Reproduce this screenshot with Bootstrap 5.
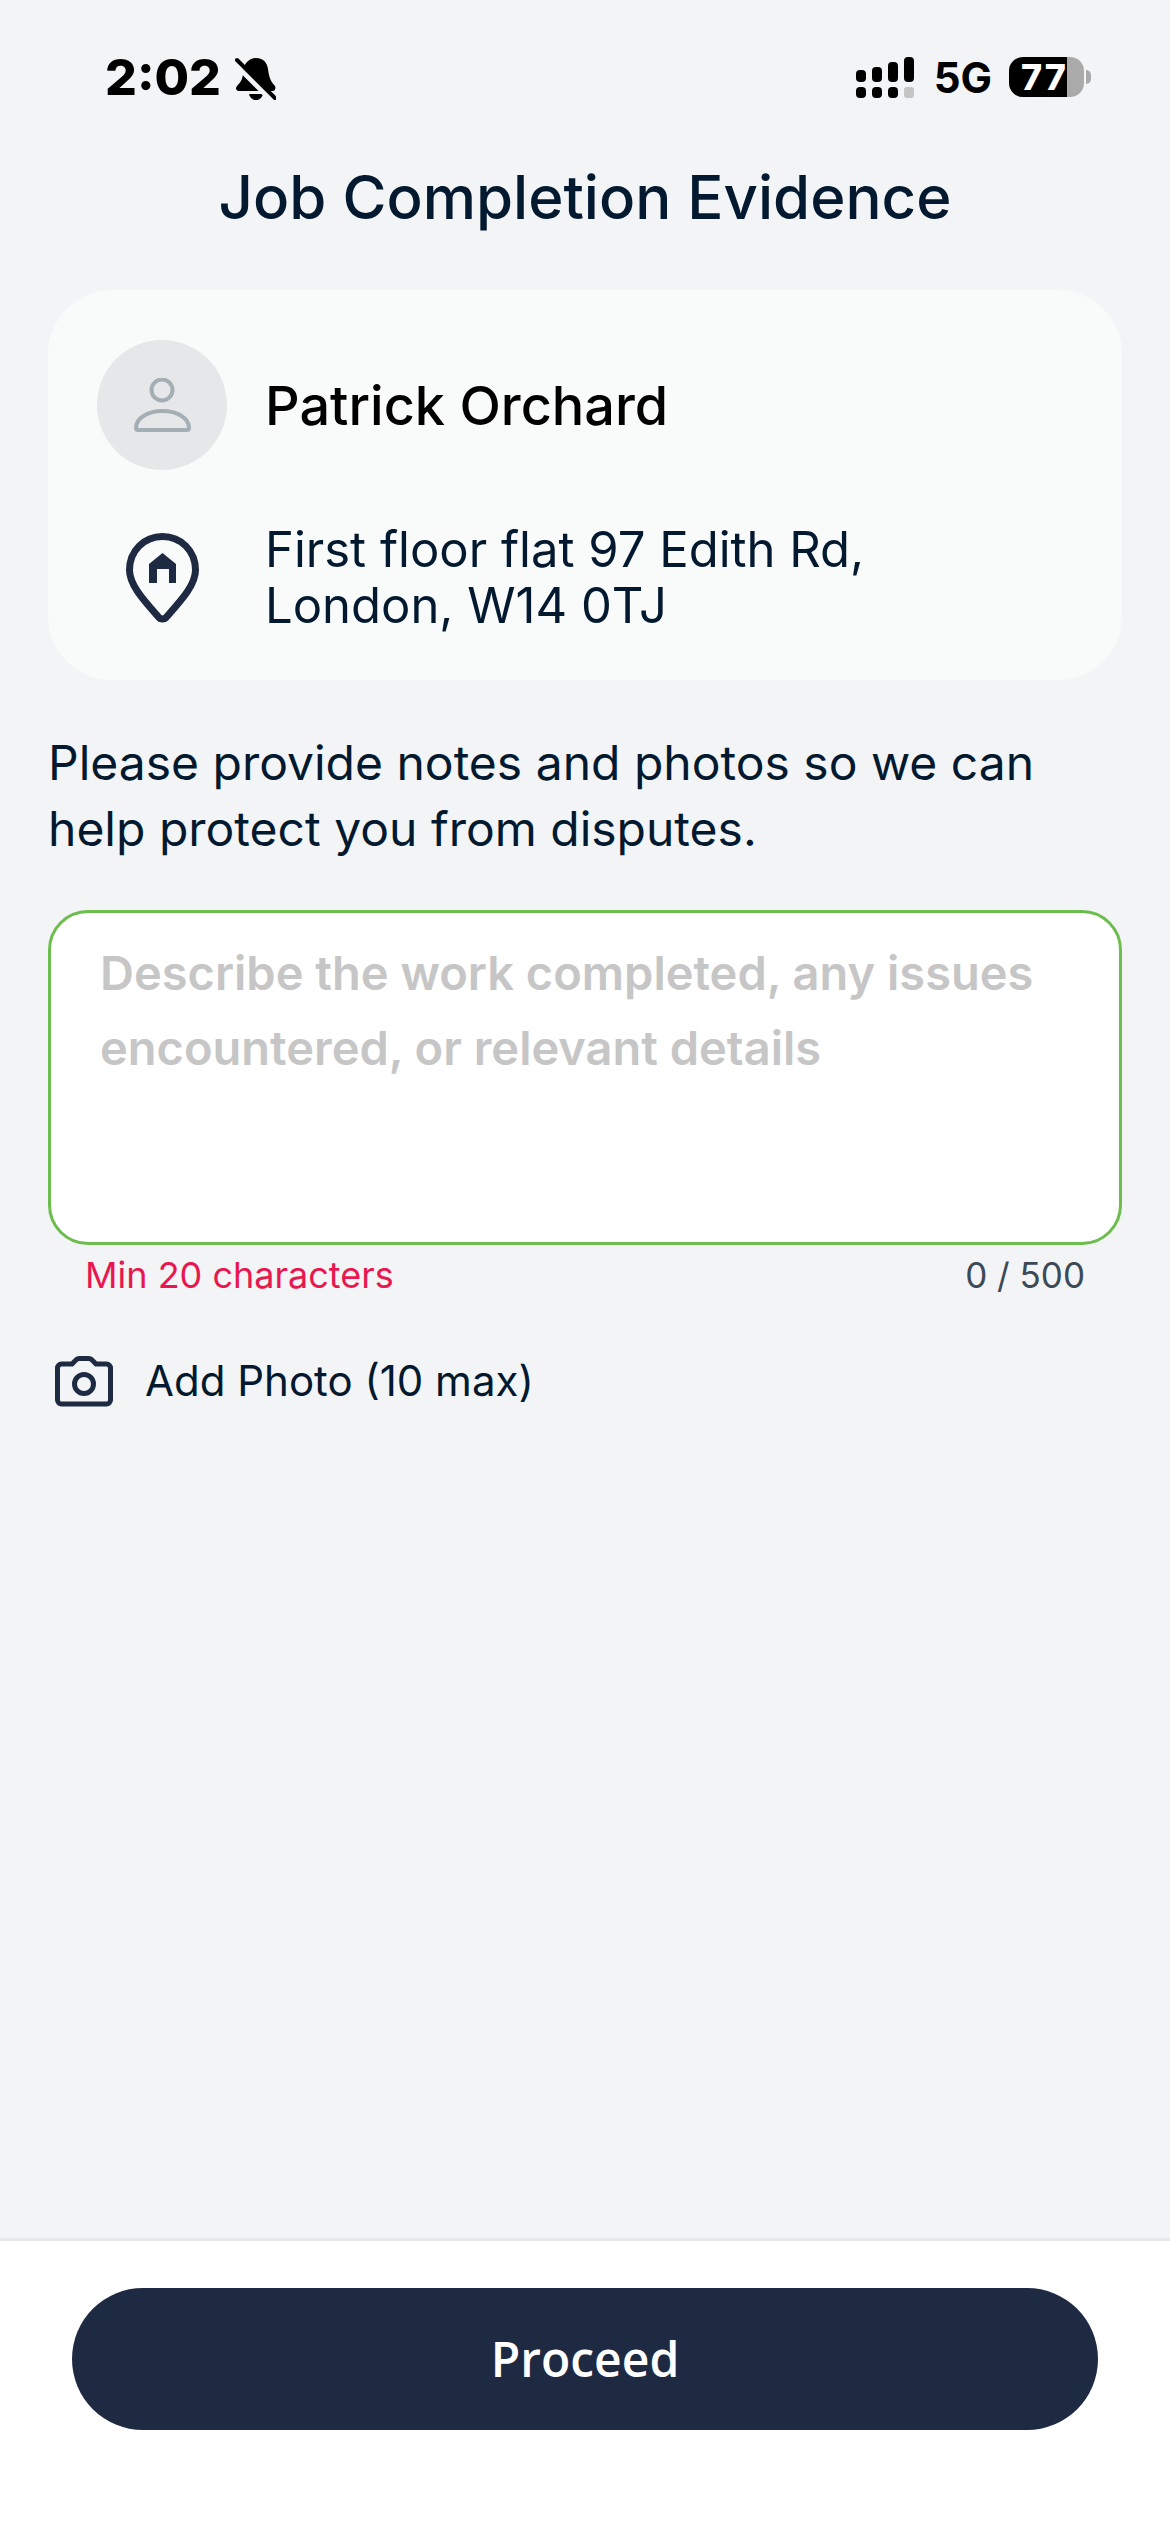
<!DOCTYPE html>
<html lang="en">
<head>
  <meta charset="UTF-8" />
  <meta name="viewport" content="width=device-width, initial-scale=1" />
  <title>Job Completion Evidence</title>
  <link rel="stylesheet" href="https://cdn.jsdelivr.net/npm/bootstrap@5.3.3/dist/css/bootstrap.min.css" />
  <style>
    body {
      background: #f2f4f6;
      font-family: Inter, "Liberation Sans", sans-serif;
      color: #03192f;
      height: 2532px;
      overflow: hidden;
    }

    .status-row {
      height: 100px;
      padding: 57px 86px 0 105px;
      color: #000;
    }

    .clock {
      font-size: 50px;
      font-weight: 800;
      line-height: 41px;
      width: 130px;
    }

    .net-label {
      font-size: 42px;
      font-weight: 700;
      line-height: 41px;
      margin: 0 17px 0 20px;
    }

    .battery-pill {
      position: relative;
      width: 75px;
      height: 40px;
      border-radius: 14px;
      background: linear-gradient(90deg, #000 77%, #aaa 77%);
      color: #fff;
      font-size: 36px;
      font-weight: 800;
      letter-spacing: 2px;
      line-height: 40px;
      padding-left: 12px;
      white-space: nowrap;
    }

    .battery-pill::after {
      content: "";
      position: absolute;
      right: -7px;
      top: 13px;
      width: 5px;
      height: 14px;
      border-radius: 0 7px 7px 0;
      background: #aaa;
    }

    .page-title {
      font-size: 60px;
      font-weight: 500;
      line-height: 72px;
      margin: 61px 0 0;
      text-align: center;
    }

    .job-card {
      margin: 57px 48px 0;
      height: 390px;
      border: 0;
      border-radius: 64px;
      background: #f9fbfa;
      padding: 50px 49px 0;
    }

    .avatar-disc {
      width: 130px;
      height: 130px;
      background: #e6e7e9;
      flex-shrink: 0;
    }

    .client-name {
      font-size: 54px;
      font-weight: 500;
      color: #000;
      margin-left: 38px;
    }

    .address-row {
      margin-top: 52px;
    }

    .pin-slot {
      width: 130px;
      flex-shrink: 0;
    }

    .address-text {
      font-size: 49px;
      font-weight: 400;
      line-height: 56px;
      margin-left: 38px;
    }

    .intro-text {
      font-size: 48px;
      line-height: 66px;
      margin: 50px 48px 0;
    }

    .notes-box.form-control {
      display: block;
      width: 1074px;
      height: 335px;
      margin: 48px 48px 0;
      border: 3px solid #6cbd4e;
      border-radius: 40px;
      background: #fff;
      padding: 22px 49px;
      font-size: 47px;
      font-weight: 600;
      line-height: 75px;
      resize: none;
      box-shadow: none;
    }

    .notes-box.form-control::placeholder {
      color: #c6c6c6;
      opacity: 1;
    }

    .hint-row {
      margin: 8px 85px 0 85px;
      font-size: 36px;
      line-height: 44px;
    }

    .hint-error {
      color: #e8174f;
    }

    .hint-count {
      color: #3c4a58;
      font-size: 35px;
    }

    .photo-row {
      margin: 58px 0 0 55px;
      font-size: 42px;
      line-height: 52px;
    }

    .photo-row svg {
      margin-right: 32px;
    }

    .foot-bar {
      height: 294px;
      background: #fff;
      border-top: 3px solid #e6e8ea;
      padding: 47px 72px 0;
    }

    .proceed-btn.btn {
      height: 142px;
      background: #1e2a42;
      border: 0;
      color: #fff;
      font-family: "Open Sans", "Noto Sans", sans-serif;
      font-size: 48px;
      font-weight: 600;
    }
  </style>
</head>
<body class="d-flex flex-column">
  <div class="flex-grow-1">
    <div class="status-row d-flex align-items-start">
      <span class="clock">2:02</span>
      <svg width="41" height="43" viewBox="0 0 41 43" aria-hidden="true">
        <path d="M21 1c8 0 11 5 12 11 1 7 2 12 7 17 1 2 0 5-2 5H4c-3 0-4-3-2-5 4-4 6-8 6-13C8 8 13 1 21 1z" />
        <path d="M14 37h14c-1 4-4 6-7 6s-6-2-7-6z" />
        <path d="M0 7l36 36" stroke="#f2f4f6" stroke-width="5" />
        <path d="M2 3l38 38" stroke="#000" stroke-width="4" stroke-linecap="round" />
      </svg>
      <span class="ms-auto d-flex align-items-start">
        <svg width="58" height="41" viewBox="0 0 58 41" aria-hidden="true">
          <rect x="0" y="13" width="10" height="12" rx="4" />
          <rect x="16" y="10" width="10" height="15" rx="4" />
          <rect x="32" y="5" width="10" height="20" rx="4" />
          <rect x="48" y="0" width="10" height="25" rx="4" />
          <rect x="0" y="30" width="10" height="11" rx="4" />
          <rect x="16" y="30" width="10" height="11" rx="4" />
          <rect x="32" y="30" width="10" height="11" rx="4" />
          <rect x="48" y="30" width="10" height="11" rx="3" fill="#c4c4c4" />
        </svg>
        <span class="net-label">5G</span>
        <span class="battery-pill">77</span>
      </span>
    </div>

    <h1 class="page-title">Job Completion Evidence</h1>

    <div class="card job-card">
      <div class="d-flex align-items-center">
        <div class="avatar-disc rounded-circle d-flex align-items-center justify-content-center">
          <svg width="57" height="54" viewBox="0 0 57 54" fill="none" stroke="#a3aeb5" stroke-width="4" aria-hidden="true">
            <circle cx="28" cy="12" r="10.5" />
            <path d="M4 52a2 2 0 0 1-2-2c0-10 12-17 26.500-17s26.500 7 26.500 17a2 2 0 0 1-2 2z" />
          </svg>
        </div>
        <div class="client-name">Patrick Orchard</div>
      </div>
      <div class="address-row d-flex align-items-center">
        <div class="pin-slot d-flex justify-content-center">
          <svg width="73" height="90" viewBox="0 0 73 90" aria-hidden="true">
            <path d="M36.500 3.500C18 3.500 3.500 18 3.500 37c0 15 14 30 29 47 2 2.500 6 2.500 8 0 15-17 29-32 29-47C69.500 18 55 3.500 36.500 3.500z" fill="none" stroke="#1e2a42" stroke-width="7" />
            <path d="M36.500 20L50 31V50H43V36H31V50H23V31z" fill="#1e2a42" />
          </svg>
        </div>
        <div class="address-text">First floor flat 97 Edith Rd,<br />London, W14 0TJ</div>
      </div>
    </div>

    <p class="intro-text">Please provide notes and photos so we can help protect you from disputes.</p>

    <textarea class="notes-box form-control" placeholder="Describe the work completed, any issues encountered, or relevant details"></textarea>

    <div class="hint-row d-flex justify-content-between align-items-center">
      <span class="hint-error">Min 20 characters</span>
      <span class="hint-count">0 / 500</span>
    </div>

    <div class="photo-row d-flex align-items-center">
      <svg width="58" height="51" viewBox="0 0 58 51" fill="none" stroke="#1e2a42" stroke-width="5" aria-hidden="true">
        <path d="M2.500 12a4 4 0 0 1 4-4h10.500l4-4q1-1.500 3-1.500h10q2 0 3 1.500l4 4h10.500a4 4 0 0 1 4 4v32a4 4 0 0 1-4 4H6.500a4 4 0 0 1-4-4z" />
        <circle cx="29" cy="28" r="9.500" />
      </svg>
      <span>Add Photo (10 max)</span>
    </div>
  </div>

  <div class="foot-bar">
    <button type="button" class="proceed-btn btn rounded-pill w-100">Proceed</button>
  </div>

  <script src="https://cdn.jsdelivr.net/npm/bootstrap@5.3.3/dist/js/bootstrap.bundle.min.js"></script>
</body>
</html>
